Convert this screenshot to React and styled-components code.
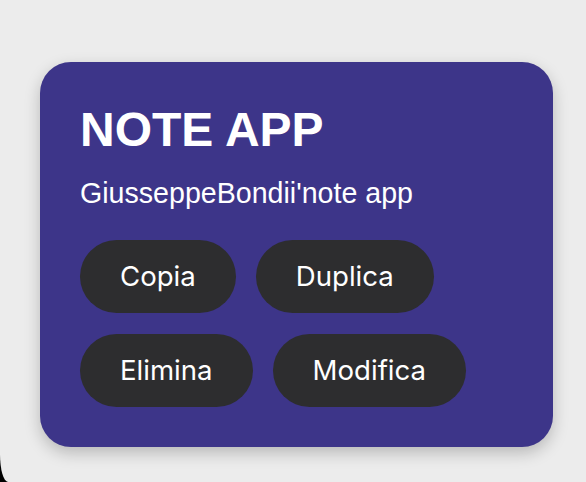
import styled, { createGlobalStyle } from "styled-components";

const GlobalStyle = createGlobalStyle`
  html, body {
    margin: 0;
    padding: 0;
    background: #000;
    overflow: hidden;
  }
`;

const Page = styled.div`
  height: 100vh;
  background: #ececec;
  border-bottom-left-radius: 8px 28px;
  padding: 62px 0 0 40px;
  box-sizing: border-box;
`;

const Card = styled.div`
  width: 513px;
  box-sizing: border-box;
  padding: 40px;
  background: #3d3589;
  border-radius: 31px;
  box-shadow: 0 6px 16px rgba(0, 0, 0, 0.22);
  color: #fff;
  font-family: "Liberation Sans", Arial, sans-serif;
`;

const Title = styled.h1`
  margin: 0;
  font-size: 48px;
  font-weight: 700;
  line-height: 55px;
`;

const Subtitle = styled.p`
  margin: 20px 0 0;
  font-size: 28.6px;
  line-height: 32px;
`;

const Actions = styled.div`
  display: flex;
  flex-wrap: wrap;
  gap: 21px 20px;
  margin-top: 31px;
`;

const ActionButton = styled.button`
  height: 73px;
  padding: 0 40px;
  border: 0;
  border-radius: 37px;
  background: #2d2d2f;
  color: #fff;
  font-family: Inter, "Noto Sans", sans-serif;
  font-size: 27.6px;
  line-height: 33px;
  cursor: pointer;
`;

const actions = ["Copia", "Duplica", "Elimina", "Modifica"];

function App() {
  return (
    <>
      <GlobalStyle />
      <Page>
        <Card>
          <Title>NOTE APP</Title>
          <Subtitle>GiusseppeBondii'note app</Subtitle>
          <Actions>
            {actions.map((label) => (
              <ActionButton key={label}>{label}</ActionButton>
            ))}
          </Actions>
        </Card>
      </Page>
    </>
  );
}

export default App;
